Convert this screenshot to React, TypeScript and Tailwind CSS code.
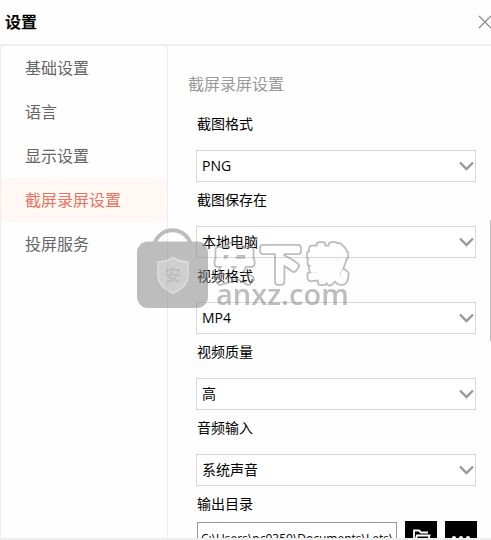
import { useState } from "react";

const menuItems = ["基础设置", "语言", "显示设置", "截屏录屏设置", "投屏服务"];

const fields = [
  { id: "image-format", label: "截图格式", options: ["PNG", "JPG"] },
  { id: "save-to", label: "截图保存在", options: ["本地电脑"] },
  { id: "video-format", label: "视频格式", options: ["MP4", "AVI"] },
  { id: "video-quality", label: "视频质量", options: ["高", "中", "低"] },
  { id: "audio-input", label: "音频输入", options: ["系统声音"] },
];

type SelectFieldProps = {
  id: string;
  label: string;
  options: string[];
};

function SelectField({ id, label, options }: SelectFieldProps) {
  return (
    <div className="mb-2">
      <label htmlFor={id} className="block h-6 pl-px text-sm leading-5">
        {label}
      </label>
      <div className="relative mt-3">
        <select
          id={id}
          className="block h-8 w-full appearance-none border border-[#d9d9d9] bg-white pl-[5px] pr-8 text-sm text-black outline-none"
        >
          {options.map((option) => (
            <option key={option}>{option}</option>
          ))}
        </select>
        <svg
          className="pointer-events-none absolute right-px top-[11px] h-[10px] w-4"
          viewBox="0 0 16 10"
          fill="none"
          stroke="#999"
          strokeWidth="2.4"
        >
          <path d="M1 1.500 7.500 8l6.500-6.500" />
        </svg>
      </div>
    </div>
  );
}

function Watermark() {
  return (
    <svg
      className="pointer-events-none absolute left-[137px] top-[228px] h-[84px] w-[216px]"
      viewBox="0 0 216 84"
    >
      <defs>
        <mask id="outline" maskUnits="userSpaceOnUse" x="70" y="0" width="146" height="84">
          <g
            fontSize="39"
            strokeLinejoin="round"
            className="font-['Noto_Sans_CJK_SC',sans-serif]"
          >
            <text y="50" fill="#fff" stroke="#fff" strokeWidth="8">
              <tspan x="78">安</tspan>
              <tspan x="124">下</tspan>
              <tspan x="171">载</tspan>
            </text>
            <text y="50" fill="#000" stroke="#000" strokeWidth="4.500">
              <tspan x="78">安</tspan>
              <tspan x="124">下</tspan>
              <tspan x="171">载</tspan>
            </text>
          </g>
        </mask>
      </defs>
      <g opacity="0.55">
        <path d="M17 17a19 19 0 0 1 37 0" fill="none" stroke="#888" strokeWidth="4" />
        <rect y="13.500" width="71" height="66.500" rx="11" fill="#888" />
        <path
          d="M36 29.500q7 4.500 15 4.500v13q0 12-15 18-15-6-15-18V34q8 0 15-4.500z"
          fill="#a9a9a9"
          stroke="#c4c4c4"
          strokeWidth="1.500"
        />
        <text
          x="28"
          y="53"
          fontSize="16"
          fontWeight="700"
          fill="#888"
          className="font-['Noto_Sans_CJK_SC',sans-serif]"
        >
          安
        </text>
        <rect x="70" y="0" width="146" height="84" fill="#888" mask="url(#outline)" />
        <text
          x="79"
          y="77"
          fontSize="29"
          fontWeight="600"
          fill="#888"
          className="font-['Open_Sans',sans-serif]"
        >
          anxz.com
        </text>
      </g>
    </svg>
  );
}

export default function App() {
  const [active, setActive] = useState("截屏录屏设置");

  return (
    <div className="relative flex h-screen flex-col overflow-hidden border-b-2 border-[#eeeeee] bg-[#fefefe] font-['Open_Sans','Noto_Sans_CJK_SC',sans-serif] text-black">
      <header className="flex h-[46px] shrink-0 items-center justify-between border-b-2 border-[#eeeeee] pl-[5px]">
        <h1 className="text-base font-bold">设置</h1>
        <button type="button" aria-label="关闭" className="h-4 w-[13px] overflow-hidden">
          <svg className="h-4 w-[14px]" viewBox="0 0 14 16" stroke="#888" strokeWidth="1.2">
            <path d="M1 2l12 12M13 2 1 14" />
          </svg>
        </button>
      </header>

      <div className="flex min-h-0 flex-1">
        <nav className="w-[168px] shrink-0 border-x border-[#eeeeee]">
          {menuItems.map((item) => (
            <button
              key={item}
              type="button"
              onClick={() => setActive(item)}
              className={
                item === active
                  ? "block h-11 w-full bg-[#fff8f5] pl-6 text-left text-base text-[#e87461]"
                  : "block h-11 w-full pl-6 text-left text-base text-[#666]"
              }
            >
              {item}
            </button>
          ))}
        </nav>

        <main className="min-w-0 flex-1 overflow-hidden pl-5 pr-[14px] pt-[26px]">
          <h2 className="text-base leading-6 text-[#999]">截屏录屏设置</h2>
          <div className="pl-2 pt-[18px]">
            <div className="pr-px">
              {fields.map((field) => (
                <SelectField key={field.id} {...field} />
              ))}
            </div>
            <label htmlFor="output" className="block h-6 pl-px text-sm leading-5">
              输出目录
            </label>
            <div className="mt-[3px] flex items-center gap-2 pl-px">
              <input
                id="output"
                defaultValue="C:\Users\pc0359\Documents\Lets\"
                className="h-8 min-w-0 flex-1 border border-[#999] bg-white pl-[3px] text-xs outline-none"
              />
              <button
                type="button"
                aria-label="打开目录"
                className="flex h-[34px] w-8 shrink-0 items-center justify-center bg-black"
              >
                <svg className="size-5" viewBox="0 0 20 20" fill="none" stroke="#fff" strokeWidth="1.800">
                  <path d="M3 17V2.500h5l2 2h7M3 17l3-9.500h12.500L16 17z" />
                </svg>
              </button>
              <button
                type="button"
                aria-label="更多"
                className="flex h-[34px] w-8 shrink-0 items-center justify-center bg-black"
              >
                <svg className="h-4 w-5" viewBox="0 0 20 16" fill="#fff">
                  <circle cx="3" cy="8" r="2" />
                  <circle cx="10" cy="8" r="2" />
                  <circle cx="17" cy="8" r="2" />
                </svg>
              </button>
            </div>
          </div>
        </main>
      </div>

      <div className="absolute right-0 top-[220px] h-[121px] w-px bg-[#bdbdbd]" />
      <Watermark />
    </div>
  );
}
